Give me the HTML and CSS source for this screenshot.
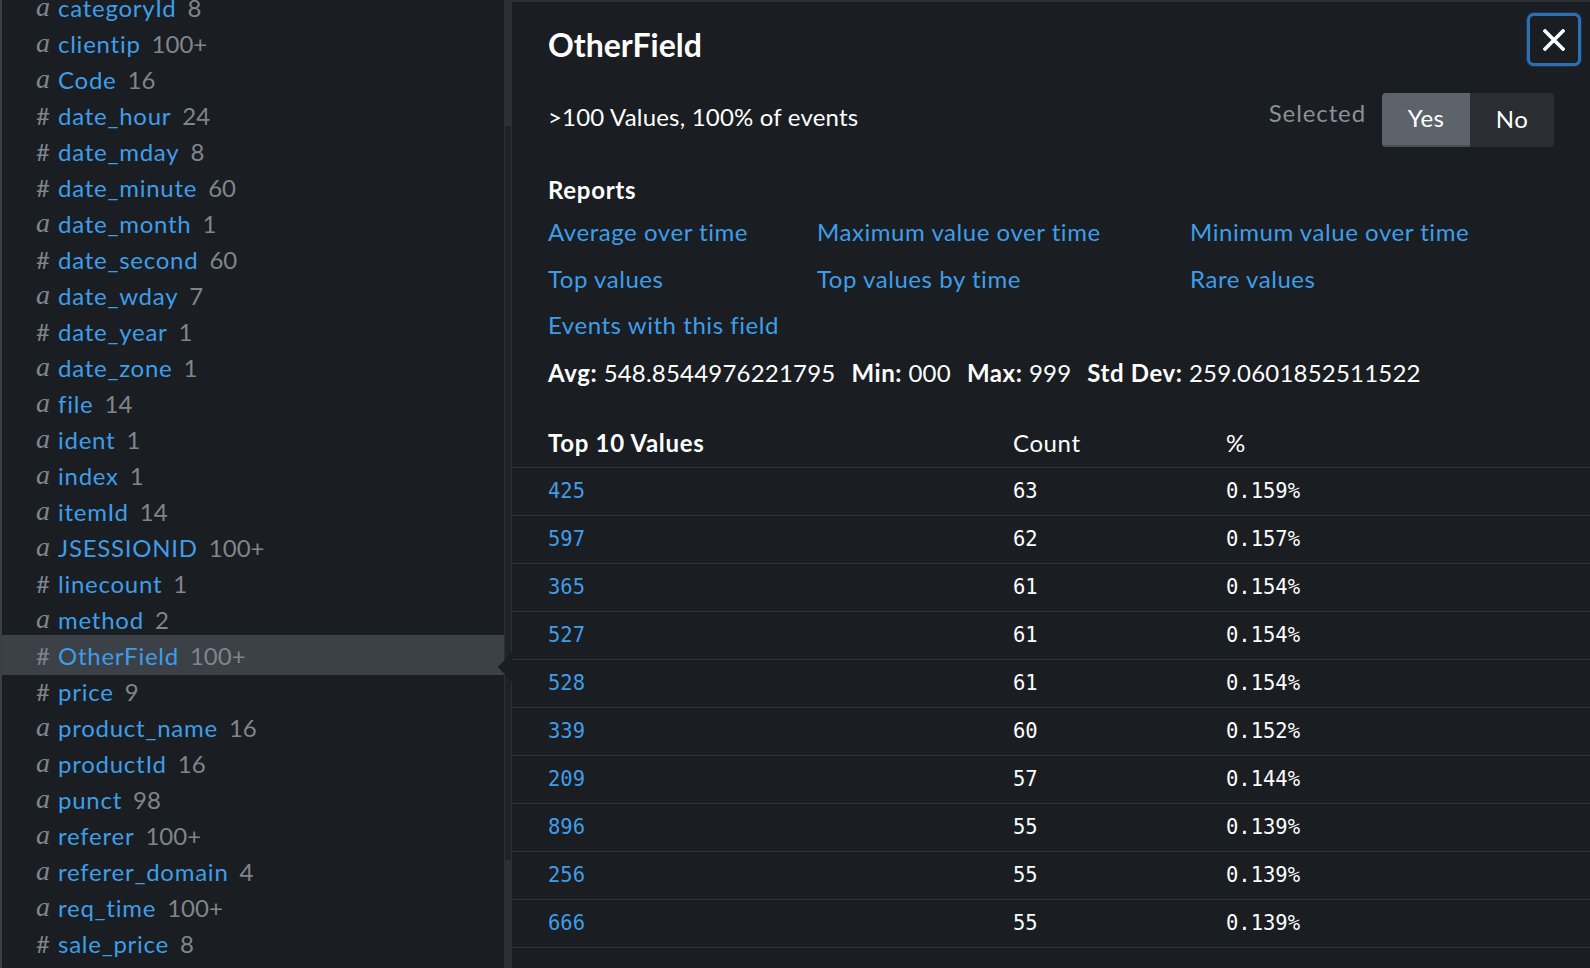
FILE: index.html
```html
<!DOCTYPE html>
<html>
<head>
<meta charset="utf-8">
<link rel="stylesheet" href="styles.css">
</head>
<body>
<div class="app">
  <aside class="sidebar">
    <ul class="fields">
      <li class="field"><span class="ft ft-a">a</span><span class="fname">categoryId</span><span class="fcount">8</span></li>
      <li class="field"><span class="ft ft-a">a</span><span class="fname">clientip</span><span class="fcount">100+</span></li>
      <li class="field"><span class="ft ft-a">a</span><span class="fname">Code</span><span class="fcount">16</span></li>
      <li class="field"><span class="ft ft-n">#</span><span class="fname">date_hour</span><span class="fcount">24</span></li>
      <li class="field"><span class="ft ft-n">#</span><span class="fname">date_mday</span><span class="fcount">8</span></li>
      <li class="field"><span class="ft ft-n">#</span><span class="fname">date_minute</span><span class="fcount">60</span></li>
      <li class="field"><span class="ft ft-a">a</span><span class="fname">date_month</span><span class="fcount">1</span></li>
      <li class="field"><span class="ft ft-n">#</span><span class="fname">date_second</span><span class="fcount">60</span></li>
      <li class="field"><span class="ft ft-a">a</span><span class="fname">date_wday</span><span class="fcount">7</span></li>
      <li class="field"><span class="ft ft-n">#</span><span class="fname">date_year</span><span class="fcount">1</span></li>
      <li class="field"><span class="ft ft-a">a</span><span class="fname">date_zone</span><span class="fcount">1</span></li>
      <li class="field"><span class="ft ft-a">a</span><span class="fname">file</span><span class="fcount">14</span></li>
      <li class="field"><span class="ft ft-a">a</span><span class="fname">ident</span><span class="fcount">1</span></li>
      <li class="field"><span class="ft ft-a">a</span><span class="fname">index</span><span class="fcount">1</span></li>
      <li class="field"><span class="ft ft-a">a</span><span class="fname">itemId</span><span class="fcount">14</span></li>
      <li class="field"><span class="ft ft-a">a</span><span class="fname">JSESSIONID</span><span class="fcount">100+</span></li>
      <li class="field"><span class="ft ft-n">#</span><span class="fname">linecount</span><span class="fcount">1</span></li>
      <li class="field"><span class="ft ft-a">a</span><span class="fname">method</span><span class="fcount">2</span></li>
      <li class="field field-selected"><span class="ft ft-n">#</span><span class="fname">OtherField</span><span class="fcount">100+</span></li>
      <li class="field"><span class="ft ft-n">#</span><span class="fname">price</span><span class="fcount">9</span></li>
      <li class="field"><span class="ft ft-a">a</span><span class="fname">product_name</span><span class="fcount">16</span></li>
      <li class="field"><span class="ft ft-a">a</span><span class="fname">productId</span><span class="fcount">16</span></li>
      <li class="field"><span class="ft ft-a">a</span><span class="fname">punct</span><span class="fcount">98</span></li>
      <li class="field"><span class="ft ft-a">a</span><span class="fname">referer</span><span class="fcount">100+</span></li>
      <li class="field"><span class="ft ft-a">a</span><span class="fname">referer_domain</span><span class="fcount">4</span></li>
      <li class="field"><span class="ft ft-a">a</span><span class="fname">req_time</span><span class="fcount">100+</span></li>
      <li class="field"><span class="ft ft-n">#</span><span class="fname">sale_price</span><span class="fcount">8</span></li>
    </ul>
  </aside>
  <div class="gutter"><div class="thumb"></div></div>
  <section class="panel">
    <div class="caret"></div>
    <header class="panel-head">
      <h1 class="title">OtherField</h1>
      <button class="close" type="button" aria-label="Close">
        <svg width="22" height="22" viewBox="0 0 22 22"><path d="M2 2 L20 20 M20 2 L2 20" stroke="#ffffff" stroke-width="3.6" stroke-linecap="square" fill="none"/></svg>
      </button>
    </header>
    <div class="summary">
      <span class="summary-text">&gt;100 Values, 100% of events</span>
      <div class="select-box">
        <span class="select-label">Selected</span>
        <div class="toggle">
          <span class="tg tg-on">Yes</span>
          <span class="tg tg-off">No</span>
        </div>
      </div>
    </div>
    <h2 class="reports-title">Reports</h2>
    <div class="reports">
      <a class="rlink">Average over time</a>
      <a class="rlink">Maximum value over time</a>
      <a class="rlink">Minimum value over time</a>
      <a class="rlink">Top values</a>
      <a class="rlink">Top values by time</a>
      <a class="rlink">Rare values</a>
      <a class="rlink">Events with this field</a>
    </div>
    <div class="stats">
      <span class="stat"><b>Avg:</b> 548.8544976221795</span>
      <span class="stat"><b>Min:</b> 000</span>
      <span class="stat"><b>Max:</b> 999</span>
      <span class="stat"><b>Std Dev:</b> 259.0601852511522</span>
    </div>
    <div class="vtable">
      <div class="vrow vhead"><span class="c1">Top 10 Values</span><span class="c2">Count</span><span class="c3">%</span></div>
      <div class="vrow"><a class="c1 val">425</a><span class="c2 num">63</span><span class="c3 num">0.159%</span></div>
      <div class="vrow"><a class="c1 val">597</a><span class="c2 num">62</span><span class="c3 num">0.157%</span></div>
      <div class="vrow"><a class="c1 val">365</a><span class="c2 num">61</span><span class="c3 num">0.154%</span></div>
      <div class="vrow"><a class="c1 val">527</a><span class="c2 num">61</span><span class="c3 num">0.154%</span></div>
      <div class="vrow"><a class="c1 val">528</a><span class="c2 num">61</span><span class="c3 num">0.154%</span></div>
      <div class="vrow"><a class="c1 val">339</a><span class="c2 num">60</span><span class="c3 num">0.152%</span></div>
      <div class="vrow"><a class="c1 val">209</a><span class="c2 num">57</span><span class="c3 num">0.144%</span></div>
      <div class="vrow"><a class="c1 val">896</a><span class="c2 num">55</span><span class="c3 num">0.139%</span></div>
      <div class="vrow"><a class="c1 val">256</a><span class="c2 num">55</span><span class="c3 num">0.139%</span></div>
      <div class="vrow"><a class="c1 val">666</a><span class="c2 num">55</span><span class="c3 num">0.139%</span></div>
    </div>
  </section>
</div>
</body>
</html>
```

FILE: styles.css
```css
* { box-sizing: border-box; }
html, body {
  margin: 0;
  padding: 0;
  width: 1590px;
  height: 968px;
  overflow: hidden;
  background: #2c2f34;
  font-family: Lato, "Open Sans", sans-serif;
  color: #ffffff;
}
.app {
  display: flex;
  height: 968px;
}
.sidebar {
  width: 504px;
  flex: none;
  background: #1a1d21;
  border-left: 2px solid #3b3e43;
  overflow: hidden;
}
.fields {
  list-style: none;
  margin: -11px 0 0 0;
  padding: 0;
}
.field {
  display: flex;
  align-items: center;
  height: 36px;
  padding-left: 34px;
  font-size: 24px;
  white-space: nowrap;
}
.field-selected {
  height: 40px;
  margin: -2px 0;
  background: #3c4047;
}
.ft {
  width: 22px;
  flex: none;
  color: #80858c;
}
.ft-a {
  font-family: "Liberation Serif", "DejaVu Serif", serif;
  font-style: italic;
  font-size: 28px;
}
.ft-n {
  font-size: 24px;
}
.fname {
  color: #3f9de8;
  letter-spacing: 0.75px;
}
.fcount {
  color: #80858c;
  margin-left: 11px;
}
.gutter {
  width: 8px;
  flex: none;
  padding-top: 126px;
  display: flex;
  justify-content: center;
}
.thumb {
  width: 6px;
  height: 734px;
  background: #1f2226;
}
.panel {
  position: relative;
  flex: 1;
  margin-top: 2px;
  background: #1a1d21;
  display: flex;
  flex-direction: column;
}
.caret {
  position: absolute;
  left: -14px;
  top: 650px;
  width: 0;
  height: 0;
  border-top: 15px solid transparent;
  border-bottom: 15px solid transparent;
  border-right: 14px solid #1a1d21;
}
.panel-head {
  display: flex;
  justify-content: space-between;
  align-items: flex-start;
  padding: 11px 9px 0 36px;
}
.title {
  margin: 16px 0 0 0;
  font-size: 32px;
  line-height: 32px;
  font-weight: 700;
}
.close {
  width: 54px;
  height: 53px;
  border: 3px solid #2d6fb3;
  border-radius: 7px;
  background: #1a1d21;
  display: flex;
  align-items: center;
  justify-content: center;
  padding: 0;
  box-shadow: 0 0 2px #2d6fb3;
}
.close svg { display: block; }
.summary {
  display: flex;
  justify-content: space-between;
  align-items: center;
  padding: 27px 36px 0 36px;
}
.summary-text {
  font-size: 24px;
  line-height: 30px;
  letter-spacing: 0.2px;
  margin-bottom: 7px;
}
.select-box {
  display: flex;
  align-items: center;
  gap: 16px;
}
.select-label {
  color: #8b9097;
  font-size: 24px;
  letter-spacing: 0.9px;
  margin-bottom: 16px;
}
.toggle {
  display: flex;
  height: 54px;
  border-radius: 4px;
  overflow: hidden;
}
.tg {
  display: flex;
  align-items: center;
  justify-content: center;
  font-size: 24px;
  letter-spacing: 0.4px;
  padding-bottom: 3px;
}
.tg-on {
  width: 88px;
  background: #5c636b;
  border-bottom: 2px solid #4a5057;
}
.tg-off {
  width: 84px;
  background: #2a2e33;
}
.reports-title {
  margin: 28px 0 0 0;
  padding-left: 36px;
  font-size: 24px;
  line-height: 30px;
  font-weight: 700;
  letter-spacing: 0.7px;
}
.reports {
  display: grid;
  grid-template-columns: 269px 373px auto;
  grid-auto-rows: 46.5px;
  align-items: center;
  padding: 4px 36px 0 36px;
}
.rlink {
  color: #3f9de8;
  font-size: 24px;
  line-height: 30px;
  letter-spacing: 0.55px;
}
.stats {
  display: flex;
  gap: 16px;
  padding: 9px 36px 0 36px;
  font-size: 24px;
  line-height: 30px;
  letter-spacing: 0.2px;
}
.stat b { font-weight: 700; letter-spacing: 0.6px; }
.vtable {
  margin-top: 30px;
}
.vrow {
  display: grid;
  grid-template-columns: 465px 213px 1fr;
  align-items: center;
  height: 48px;
  padding-left: 36px;
  border-bottom: 1px solid #30343a;
}
.vhead {
  height: 50px;
  font-size: 24px;
  letter-spacing: 0.6px;
}
.vhead .c1 { font-weight: 700; letter-spacing: 0.7px; }
.val {
  color: #3f9de8;
}
.val, .num {
  font-family: "DejaVu Sans Mono", "Liberation Mono", monospace;
  font-size: 20.5px;
  letter-spacing: 0;
}
```
